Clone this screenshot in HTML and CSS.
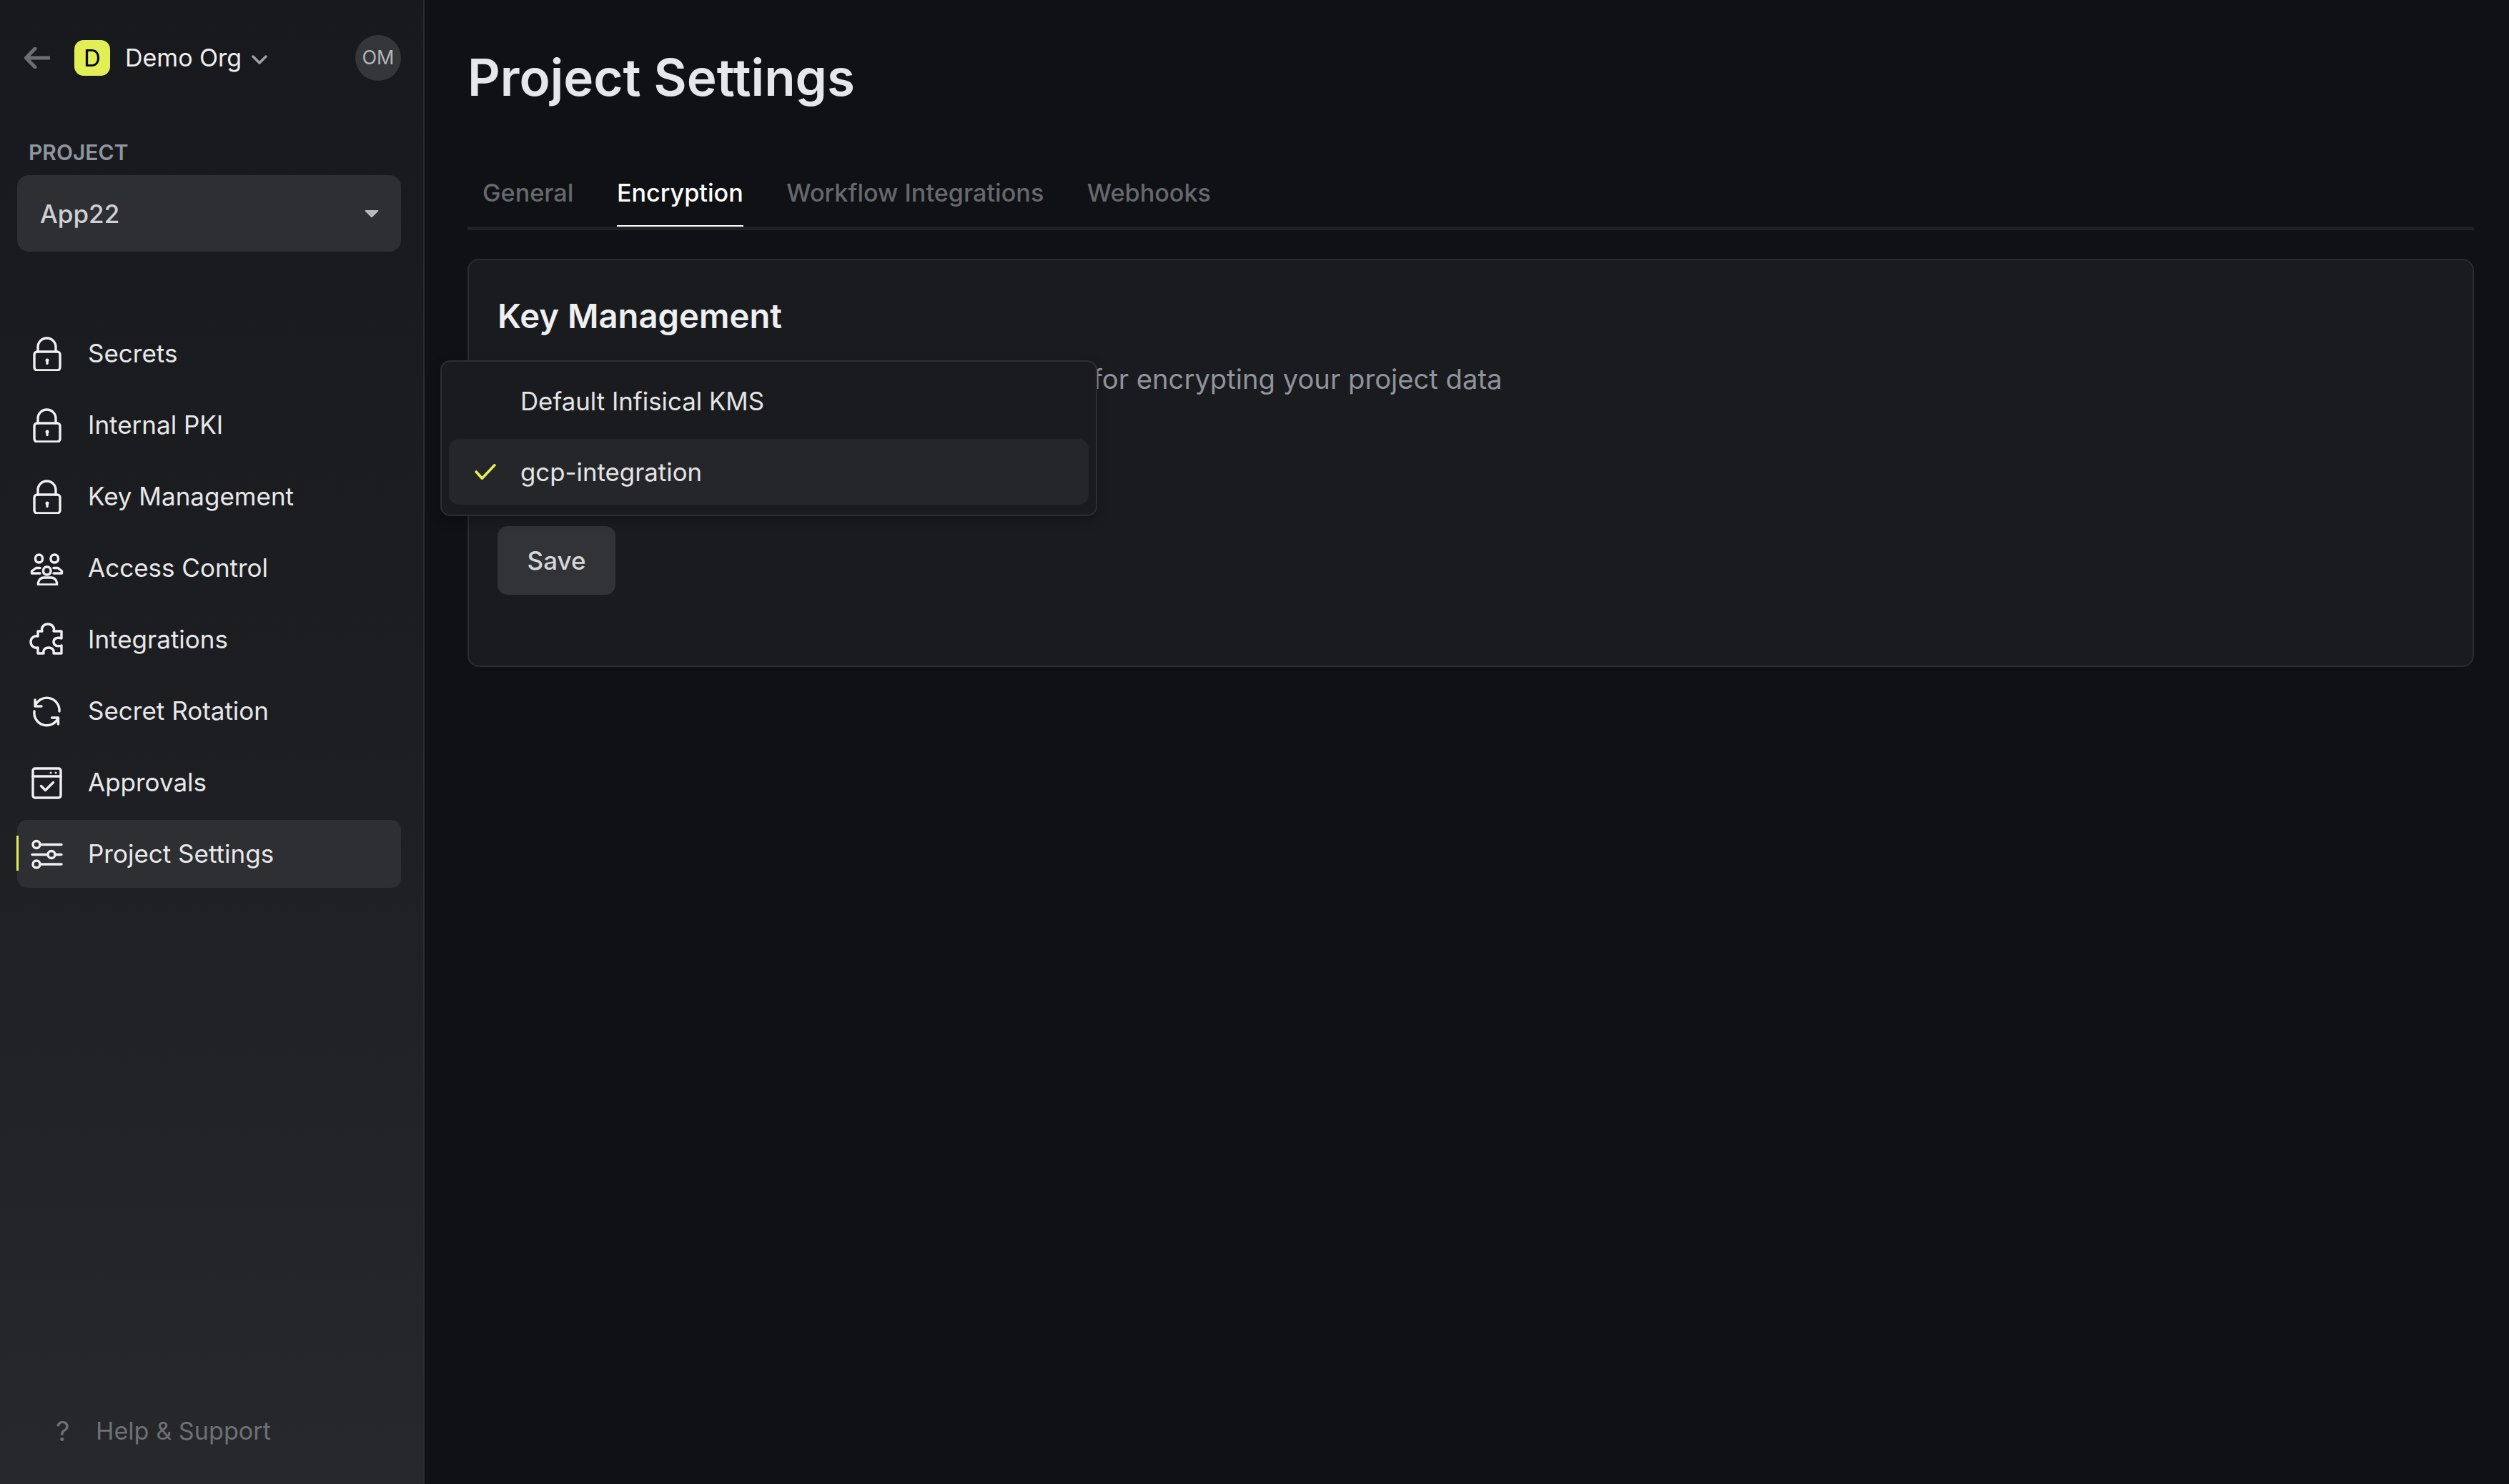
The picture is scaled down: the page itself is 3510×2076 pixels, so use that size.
FILE: index.html
```html
<!DOCTYPE html>
<html lang="en">
<head>
<meta charset="utf-8">
<title>Project Settings</title>
<link rel="stylesheet" href="styles.css">
</head>
<body>
<div class="app">
  <aside class="sidebar">
    <div class="org-bar">
      <svg class="back" viewBox="0 0 36 30"><path d="M35 15H3M15 2 2.5 15 15 28"/></svg>
      <span class="org-badge">D</span>
      <span class="org-name">Demo Org</span>
      <svg class="org-chevron" viewBox="0 0 22 13"><path d="M2 2l9 9 9-9"/></svg>
      <span class="avatar">OM</span>
    </div>
    <div class="project-label">PROJECT</div>
    <div class="project-select">
      <span>App22</span>
      <svg class="caret" viewBox="0 0 20 12"><path d="M1.5 1h17a1 1 0 0 1 .7 1.6L10.7 11a1 1 0 0 1-1.4 0L.8 2.6A1 1 0 0 1 1.500 1z"/></svg>
    </div>
    <nav class="nav">
      <a class="nav-item">
        <svg class="nav-icon" viewBox="0 0 48 48"><rect x="7" y="21" width="36" height="26" rx="4"/><path d="M12 21v-6.500a12.500 12.500 0 0 1 25 0V21"/><circle class="fill" cx="25" cy="33" r="2.500"/><path d="M25 33v4.500"/></svg>
        <span>Secrets</span>
      </a>
      <a class="nav-item">
        <svg class="nav-icon" viewBox="0 0 48 48"><rect x="7" y="21" width="36" height="26" rx="4"/><path d="M12 21v-6.500a12.500 12.500 0 0 1 25 0V21"/><circle class="fill" cx="25" cy="33" r="2.500"/><path d="M25 33v4.500"/></svg>
        <span>Internal PKI</span>
      </a>
      <a class="nav-item">
        <svg class="nav-icon" viewBox="0 0 48 48"><rect x="7" y="21" width="36" height="26" rx="4"/><path d="M12 21v-6.500a12.500 12.500 0 0 1 25 0V21"/><circle class="fill" cx="25" cy="33" r="2.500"/><path d="M25 33v4.500"/></svg>
        <span>Key Management</span>
      </a>
      <a class="nav-item">
        <svg class="nav-icon" viewBox="0 0 48 48"><rect x="8.500" y="5" width="10" height="11" rx="5"/><rect x="30" y="5" width="10.500" height="11" rx="5"/><rect x="19.500" y="22" width="10.500" height="11" rx="5"/><path d="M15 23.500H9.500L3.500 28v3H15M34 23.500h6l5.500 4.500v3H34M12.500 47h26v-3a8 8 0 0 0-8-7H20.500a8 8 0 0 0-8 7z"/></svg>
        <span>Access Control</span>
      </a>
      <a class="nav-item">
        <svg class="nav-icon" viewBox="0 0 48 48"><path d="M18 12C16 6 21 2 26 2s10 4 8 10h11v10c-6-2-11 0-11 5s5 7 11 5v11H34c1-5-2-8-7-8s-8 3-7 8h-8v-8c-5 1-10-2-10-8s5-9 10-8v-7z"/></svg>
        <span>Integrations</span>
      </a>
      <a class="nav-item">
        <svg class="nav-icon" viewBox="0 0 48 48"><path d="M8 8v9h9M8 17A17.500 17.500 0 0 1 42 24M40.500 42v-9h-9M40.500 33A17.500 17.500 0 0 1 7 24"/></svg>
        <span>Secret Rotation</span>
      </a>
      <a class="nav-item">
        <svg class="nav-icon" viewBox="0 0 48 48"><rect x="5" y="4" width="39" height="41" rx="3"/><path d="M5 15h39M16.500 28.500l6 6 11-11"/><circle class="fill" cx="30" cy="10" r="1.500"/><circle class="fill" cx="37" cy="10" r="1.500"/></svg>
        <span>Approvals</span>
      </a>
      <a class="nav-item is-active">
        <span class="nav-marker"></span>
        <svg class="nav-icon" viewBox="0 0 48 48"><circle cx="10" cy="10.500" r="5"/><circle cx="31" cy="24.500" r="5"/><circle cx="10" cy="38" r="5"/><path d="M15 10.500h30M4 24.500h22M36 24.500h9M15 38h30"/></svg>
        <span>Project Settings</span>
      </a>
    </nav>
    <div class="help">
      <span class="help-mark">?</span>
      <span>Help &amp; Support</span>
    </div>
  </aside>
  <main class="main">
    <h1 class="page-title">Project Settings</h1>
    <div class="tabs">
      <span class="tab">General</span>
      <span class="tab is-active">Encryption</span>
      <span class="tab">Workflow Integrations</span>
      <span class="tab">Webhooks</span>
    </div>
    <section class="card">
      <h2 class="card-title">Key Management</h2>
      <p class="card-text">Select which Key Management System to use for encrypting your project data</p>
      <button class="save" type="button">Save</button>
      <div class="menu">
        <div class="menu-item">Default Infisical KMS</div>
        <div class="menu-item is-selected">
          <svg class="check" viewBox="0 0 32 24"><path d="M2 12l9 10L30 2"/></svg>
          gcp-integration
        </div>
      </div>
    </section>
  </main>
</div>
</body>
</html>
```

FILE: styles.css
```css
* { box-sizing: border-box; }
html, body { margin: 0; height: 100%; }
body {
  background: #0f1115;
  color: #eee;
  font-family: Inter, "Noto Sans", "Liberation Sans", sans-serif;
  font-size: 35px;
}
.app { display: flex; height: 2076px; overflow: hidden; }

.sidebar {
  width: 594px;
  flex: none;
  display: flex;
  flex-direction: column;
  padding: 48px 31px 0 24px;
  background: linear-gradient(180deg, #18191c 0%, #1d1e21 50%, #27282b 100%);
  border-right: 2px solid #2b2c2f;
}
.org-bar { display: flex; align-items: center; height: 65px; padding-left: 10px; }
.back { width: 36px; height: 30px; fill: none; stroke: #6d6e72; stroke-width: 5; stroke-linecap: round; stroke-linejoin: round; }
.org-badge {
  width: 50px; height: 50px; margin-left: 34px;
  display: flex; align-items: center; justify-content: center;
  border-radius: 13px; background: #e2ee55; color: #000; font-size: 33px;
}
.org-name { margin-left: 21px; font-size: 34px; color: #eeeeef; }
.org-chevron { width: 22px; height: 13px; margin: 5px 0 0 14px; fill: none; stroke: #a0a1a4; stroke-width: 3.500; stroke-linecap: round; stroke-linejoin: round; }
.avatar {
  width: 64px; height: 64px; margin-left: auto;
  display: flex; align-items: center; justify-content: center;
  border-radius: 50%; background: #35363a; color: #b4b5b8; font-size: 27px;
}
.project-label { margin: 82px 0 0 16px; font-size: 30px; line-height: 36px; font-weight: 600; color: #8f95a0; }
.project-select {
  display: flex; align-items: center; justify-content: space-between;
  height: 107px; margin-top: 14px; padding: 0 31px 0 32px;
  border-radius: 16px; background: #2e2f33;
  font-size: 35px; font-weight: 500; color: #cfd0d3;
}
.caret { width: 20px; height: 12px; fill: #b8b9bc; }

.nav { display: flex; flex-direction: column; gap: 5px; margin-top: 95px; }
.nav-item {
  position: relative;
  display: flex; align-items: center; gap: 34px;
  height: 95px; padding-left: 17px;
  border-radius: 14px; color: #e8e8ea;
  font-size: 35px;
}
.nav-item > span:last-child { padding-bottom: 2px; }
.nav-item.is-active { background: #2e2f33; }
.nav-marker { position: absolute; left: -1px; top: 22px; width: 3px; height: 49px; background: #e2ee55; }
.nav-icon { width: 48px; height: 48px; flex: none; fill: none; stroke: #f0f0f1; stroke-width: 3.400; stroke-linecap: round; stroke-linejoin: round; }
.nav-icon .fill { fill: #f0f0f1; stroke: none; }

.help { display: flex; align-items: center; gap: 35px; margin-top: auto; margin-bottom: 52px; padding-left: 54px; color: #6f7074; font-size: 34.200px; line-height: 44px; }
.help-mark { font-size: 38px; width: 21px; }

.main { flex: 1; min-width: 0; padding: 0 49px 0 60px; }
.page-title { margin: 64px 0 0; font-size: 71px; line-height: 88px; font-weight: 600; color: #e6e7ea; }
.tabs { display: flex; gap: 60.500px; margin-top: 96px; padding-left: 21px; border-bottom: 5px solid #202125; }
.tab { padding-bottom: 23px; border-bottom: 2px solid transparent; font-size: 34.200px; line-height: 44px; font-weight: 500; color: #67686d; }
.tab.is-active { color: #fff; border-bottom-color: #fff; }

.card {
  position: relative;
  height: 571px; margin-top: 40px;
  padding: 49px 40px 0 40px;
  border: 2px solid #2b2c30; border-radius: 16px; background: #1a1b1e;
}
.card-title { margin: 0; font-size: 47.200px; line-height: 58px; font-weight: 600; color: #eeeff0; }
.card-text { margin: 35px 0 0; font-size: 38.200px; line-height: 48px; color: #8f939c; }
.save {
  display: block;
  width: 165px; height: 96px; margin-top: 182px; padding: 0;
  border: 0; border-radius: 14px; background: #323337; color: #d5d6d9;
  font: 500 35px Inter, "Noto Sans", sans-serif;
}
.menu {
  position: absolute; left: -40px; top: 140px;
  width: 919px; height: 218px; padding: 9px 10px;
  border: 2px solid #2d2e32; border-radius: 14px; background: #1a1b1e;
  box-shadow: 0 6px 16px rgba(0,0,0,.25);
}
.menu-item {
  position: relative;
  display: flex; align-items: center;
  height: 92px; margin-bottom: 7px; padding-left: 100px;
  border-radius: 14px; font-size: 34.800px; color: #e3e4e6;
}
.menu-item.is-selected { background: #25262a; }
.check { position: absolute; left: 36px; top: 35px; width: 30px; height: 22px; fill: none; stroke: #e2ee55; stroke-width: 4; stroke-linecap: round; stroke-linejoin: round; }
```
